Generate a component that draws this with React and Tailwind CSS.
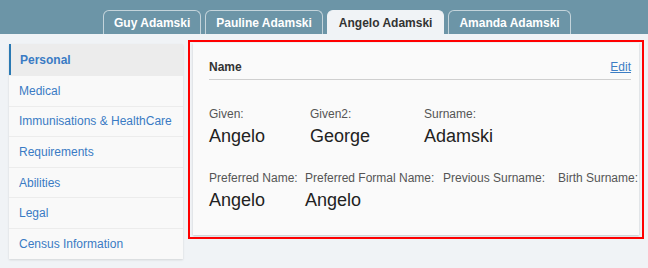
const tabs = [
  { name: "Guy Adamski" },
  { name: "Pauline Adamski" },
  { name: "Angelo Adamski", active: true },
  { name: "Amanda Adamski" },
];

const menu = [
  "Personal",
  "Medical",
  "Immunisations & HealthCare",
  "Requirements",
  "Abilities",
  "Legal",
  "Census Information",
];

function Field({ label, value, w }) {
  return (
    <div className={`shrink-0 ${w}`}>
      <div className="text-[12px] leading-[14px] text-[#555] whitespace-nowrap">{label}</div>
      <div className="mt-[4px] h-[22px] text-[18px] leading-[22px] text-[#222]">{value}</div>
    </div>
  );
}

export default function App() {
  return (
    <div className="w-[648px] h-[268px] bg-[#f0f3f6] font-['Liberation_Sans',Arial,sans-serif] overflow-hidden">
      {/* tab strip */}
      <div className="h-[34px] bg-[#6c95a7] flex items-end pl-[103px] gap-[4px]">
        {tabs.map((t) =>
          t.active ? (
            <div
              key={t.name}
              className="h-[24px] px-[11px] rounded-t-[6px] bg-[#f0f3f6] border border-b-0 border-[#f0f3f6] text-[12px] font-bold text-[#333] flex items-center"
            >
              {t.name}
            </div>
          ) : (
            <div
              key={t.name}
              className="h-[24px] px-[10px] rounded-t-[6px] border border-b-0 border-[#c4d4db] text-[12px] font-bold text-white flex items-center"
            >
              {t.name}
            </div>
          )
        )}
      </div>

      <div className="flex items-start pl-[9px] pt-[6px] gap-[5px]">
        {/* side menu */}
        <div className="w-[174px] mt-[4px] bg-[#f9f9f9] shadow-[0_1px_2px_rgba(0,0,0,0.12)]">
          {menu.map((m, i) =>
            i === 0 ? (
              <div
                key={m}
                className="h-[31px] bg-[#ececec] border-l-2 border-[#2a79b3] pl-[9px] flex items-center text-[12px] font-bold text-[#3a7bc4]"
              >
                {m}
              </div>
            ) : (
              <div
                key={m}
                className="h-[30.6px] border-t border-[#ececec] pl-[10px] flex items-center text-[12px] text-[#3a7bc4]"
              >
                {m}
              </div>
            )
          )}
        </div>

        {/* highlighted panel */}
        <div className="w-[456px] border-2 border-[#ff0000] pl-[3px] pr-[3px] pt-[1px] pb-[2px]">
          <div className="bg-[#fafafa] shadow-[0_1px_2px_rgba(0,0,0,0.18)] pl-[16px] pr-[8px] pt-[17px] pb-[24px]">
            <div className="flex justify-between border-b border-[#cfcfcf] pb-[5px]">
              <span className="text-[12px] leading-[14px] font-bold text-[#333]">Name</span>
              <a className="text-[12px] leading-[14px] text-[#3c7dc4] underline cursor-pointer">Edit</a>
            </div>

            <div className="flex mt-[27px]">
              <Field label="Given:" value="Angelo" w="w-[101px]" />
              <Field label="Given2:" value="George" w="w-[114px]" />
              <Field label="Surname:" value="Adamski" w="w-[120px]" />
            </div>

            <div className="flex mt-[24px]">
              <Field label="Preferred Name:" value="Angelo" w="w-[96px]" />
              <Field label="Preferred Formal Name:" value="Angelo" w="w-[138px]" />
              <Field label="Previous Surname:" value="" w="w-[115px]" />
              <Field label="Birth Surname:" value="" w="w-[80px]" />
            </div>
          </div>
        </div>
      </div>
    </div>
  );
}
